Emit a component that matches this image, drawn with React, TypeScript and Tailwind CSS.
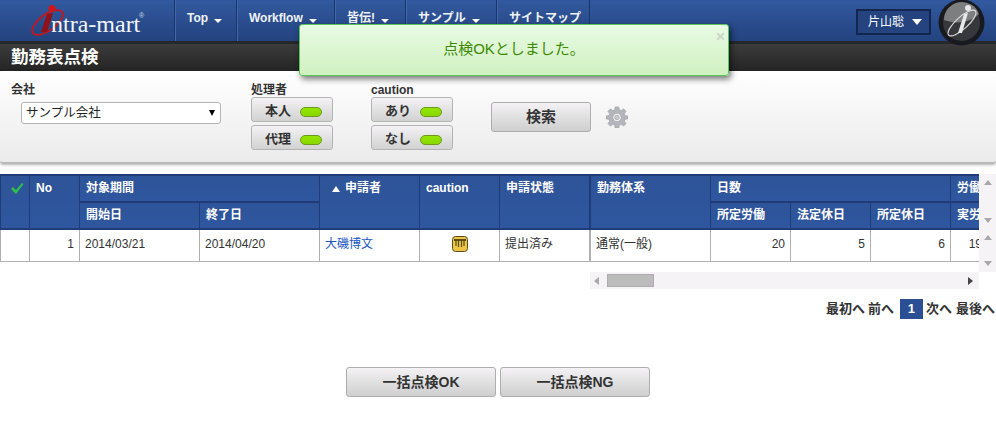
import { X } from "lucide-react";
import type { ReactNode } from "react";

const font = "font-['Liberation_Sans','Noto_Sans_CJK_JP',sans-serif]";

const navItems = [
  { label: "Top", w: "w-[62px]", caret: true },
  { label: "Workflow", w: "w-[98px]", caret: true },
  { label: "皆伝!", w: "w-[71px]", caret: true },
  { label: "サンプル", w: "w-[91px]", caret: true },
  { label: "サイトマップ", w: "w-[93px]", caret: false },
];

const Logo = () => (
  <div className="relative h-[41px] w-[174px] shrink-0">
    <svg className="absolute left-[30px] top-[3px]" width="36" height="36" viewBox="0 0 36 36">
      <ellipse cx="17.500" cy="19.500" rx="8" ry="18" transform="rotate(54 17.500 19.500)" fill="none" stroke="#c4161c" strokeWidth="1.800" />
      <circle cx="22" cy="5.500" r="3.500" fill="#d3151b" />
      <path d="M17 11 L23 10 L17 29 L11 29 Z" fill="#8f1218" />
    </svg>
    <span className="absolute left-[51px] top-[11px] font-['Liberation_Serif',serif] text-[24px] leading-[26px] text-[#f2f5fa]">
      ntra-mart
    </span>
    <span className="absolute left-[139px] top-[12px] text-[7px] leading-[8px] text-[#d5dbe8]">®</span>
  </div>
);

const Lamp = () => (
  <span className="mt-[1px] h-[10px] w-[22px] rounded-[5px] border border-[#6c9a1c] bg-gradient-to-b from-[#94e400] to-[#88d800]" />
);

const ToggleButton = ({ label }: { label: string }) => (
  <button className="flex h-[25px] w-[82px] items-center gap-[9px] rounded-[3px] border border-[#b4b4b4] bg-gradient-to-b from-[#f4f2f4] to-[#d2d2d2] pl-[13px] pt-[3px] text-[13px] font-bold text-[#333]">
    {label}
    <Lamp />
  </button>
);

const GrayButton = ({ label, className }: { label: string; className: string }) => (
  <button className={`rounded-[3px] border border-[#aeaeae] bg-gradient-to-b from-[#f4f2f4] to-[#cfcfcf] font-bold text-[#333] ${className}`}>
    {label}
  </button>
);

const Th = ({ children, className = "", ...rest }: { children?: ReactNode; className?: string; colSpan?: number; rowSpan?: number }) => (
  <th
    {...rest}
    className={`border-x border-x-[#1d3c78] border-y-2 border-y-[#1d3c78] bg-gradient-to-b from-[#2e5398] to-[#2f579f] px-[6px] py-0 pt-[4px] text-left align-top text-[12px] font-bold leading-[16px] text-white whitespace-nowrap ${className}`}
  >
    {children}
  </th>
);

const Td = ({ children, className = "" }: { children?: ReactNode; className?: string }) => (
  <td className={`h-[32px] border-x border-b border-[#b0b0b0] px-[5px] pb-[3px] text-[12px] text-[#333] ${className}`}>{children}</td>
);

const Arrow = ({ dir }: { dir: "up" | "down" | "left" | "right" }) => {
  const points = { up: "1,7 5,2 9,7", down: "1,3 9,3 5,8", left: "7,1 7,9 2,5", right: "3,1 3,9 8,5" }[dir];
  return (
    <svg width="10" height="10" viewBox="0 0 10 10">
      <polygon points={points} fill={dir === "right" ? "#444" : "#a8a8a8"} />
    </svg>
  );
};

const ScrollTrack = ({ className }: { className: string }) => (
  <div className={`flex flex-col items-center justify-between py-[4px] ${className}`}>
    <Arrow dir="up" />
    <Arrow dir="down" />
  </div>
);

const CautionIcon = () => (
  <svg className="mx-auto block" width="16" height="16" viewBox="0 0 16 16">
    <rect x="0.500" y="0.500" width="15" height="15" rx="3" fill="#ecc544" stroke="#5a4c20" />
    <rect x="2" y="3" width="12" height="2" fill="#5e4e18" />
    <path d="M4 5v5M6.500 5v6M9.500 5v6M12 5v5" stroke="#5e4e18" strokeWidth="1.200" />
  </svg>
);

const Gear = () => (
  <svg width="22" height="22" viewBox="0 0 24 24" fill="#b3b5bb" stroke="#9a9ca3" strokeWidth="0.600">
    <path
      fillRule="evenodd"
      d="M10 1h4l.6 3.200 1.900.8L19.200 3.100 21.900 5.800 20 8.500l.8 1.900L24 11v3l-3.200.6-.8 1.900 1.900 2.700-2.700 2.700-2.700-1.900-1.900.8L14 24h-4l-.6-3.200-1.900-.8-2.700 1.900-2.700-2.700L4 16.500l-.8-1.900L0 14v-3l3.200-.6.800-1.900L2.100 5.800 4.800 3.100 7.500 5l1.900-.8zM12 8a4.500 4.500 0 1 0 0 9 4.500 4.500 0 0 0 0-9z"
    />
    <circle cx="12" cy="12.500" r="2.500" fill="#c9cace" stroke="#8f9197" />
  </svg>
);

export default function App() {
  return (
    <div className={`relative h-[440px] w-[996px] overflow-hidden bg-white ${font}`}>
      {/* ヘッダー */}
      <header className="flex h-[44px] items-start border-b-[3px] border-b-[#26272b] bg-gradient-to-b from-[#32599f] to-[#24437f]">
        <Logo />
        <nav className="flex h-[41px] border-r border-r-[#1b3565]">
          {navItems.map((item) => (
            <div
              key={item.label}
              className={`flex items-start gap-[6px] border-l border-l-[#1b3565] pl-[12px] pt-[11px] text-[12px] font-bold leading-[14px] text-[#f0f3f8] shadow-[inset_1px_0_0_#3f68b0] ${item.w}`}
            >
              {item.label}
              {item.caret && <span className="mt-[8px] border-x-4 border-t-4 border-x-transparent border-t-white" />}
            </div>
          ))}
        </nav>
        <div className="ml-auto mr-[11px] flex items-start gap-[7px]">
          <div className="mt-[9px] flex h-[26px] w-[75px] items-center justify-end gap-[8px] border-2 border-[#12264f] bg-[#24437f] pr-[7px] text-[12px] text-white">
            片山聡
            <span className="border-x-[5px] border-t-[6px] border-x-transparent border-t-white" />
          </div>
          <svg width="47" height="46" viewBox="0 0 47 46">
            <circle cx="23.500" cy="22.500" r="23" fill="#181a20" />
            <circle cx="23.500" cy="22.500" r="18.500" fill="#36383c" />
            <path d="M6 20a18 18 0 0 1 35-6c-8 8-22 11-35 6z" fill="#7d7e80" />
            <ellipse cx="24" cy="23" rx="6" ry="18" transform="rotate(48 24 23)" fill="none" stroke="#dedede" strokeWidth="1.100" />
            <circle cx="30" cy="8" r="3" fill="#e8e8e8" />
            <path d="M26 14l4-1-6 20h-4z" fill="#e8e8e8" />
          </svg>
        </div>
      </header>

      {/* タイトル */}
      <div className="h-[27px] bg-gradient-to-b from-[#3c3c3c] to-[#242424] pl-[11px] pt-[2px] text-[17.500px] font-bold leading-[22px] text-white">
        勤務表点検
      </div>

      {/* 検索条件 */}
      <section className="flex h-[93px] rounded-[3px] border-b-2 border-b-[#b8b8b8] bg-gradient-to-b from-white to-[#ecebec] pl-[11px] pt-[12px] shadow-[0_1px_3px_rgba(0,0,0,0.3)]">
        <div className="w-[240px]">
          <div className="text-[12px] font-bold leading-[14px] text-[#333]">会社</div>
          <div className="ml-[10px] mt-[5px] flex h-[22px] w-[200px] items-center justify-between rounded-[3px] border border-[#b5b5b5] bg-white pl-[4px] pr-[5px] text-[12.500px] text-[#222]">
            サンプル会社
            <span className="border-x-[3.500px] border-t-[6px] border-x-transparent border-t-black" />
          </div>
        </div>
        <div className="w-[120px]">
          <div className="text-[12px] font-bold leading-[14px] text-[#333]">処理者</div>
          <div className="flex flex-col gap-[3px]">
            <ToggleButton label="本人" />
            <ToggleButton label="代理" />
          </div>
        </div>
        <div className="w-[120px]">
          <div className="text-[12px] font-bold leading-[14px] text-[#333]">caution</div>
          <div className="flex flex-col gap-[3px]">
            <ToggleButton label="あり" />
            <ToggleButton label="なし" />
          </div>
        </div>
        <GrayButton label="検索" className="mt-[19px] h-[30px] w-[100px] text-[15px]" />
        <div className="ml-[15px] mt-[23px]">
          <Gear />
        </div>
      </section>

      {/* 一覧 */}
      <div className="mt-[10px] flex h-[125px] items-start">
        <table className="w-[590px] shrink-0 table-fixed border-collapse">
          <colgroup>
            <col className="w-[29px]" />
            <col className="w-[50px]" />
            <col className="w-[120px]" />
            <col className="w-[120px]" />
            <col className="w-[100px]" />
            <col className="w-[80px]" />
            <col className="w-[90px]" />
          </colgroup>
          <thead>
            <tr className="h-[27px]">
              <Th rowSpan={2} className="!px-[9px] !pt-[5px]">
                <svg width="14" height="14" viewBox="0 0 14 14">
                  <path d="M1 8l2-2 3 3 6-7 1.500 1L6 13z" fill="#2fc04c" />
                </svg>
              </Th>
              <Th rowSpan={2}>No</Th>
              <Th colSpan={2}>対象期間</Th>
              <Th rowSpan={2} className="!pl-[12px]">
                <span className="mr-[5px] inline-block border-x-4 border-b-[6px] border-x-transparent border-b-white" />
                申請者
              </Th>
              <Th rowSpan={2}>caution</Th>
              <Th rowSpan={2}>申請状態</Th>
            </tr>
            <tr className="h-[27px]">
              <Th>開始日</Th>
              <Th>終了日</Th>
            </tr>
          </thead>
          <tbody>
            <tr>
              <Td />
              <Td className="text-right">1</Td>
              <Td>2014/03/21</Td>
              <Td>2014/04/20</Td>
              <Td>
                <span className="text-[#1a56c4]">大磯博文</span>
              </Td>
              <Td>
                <CautionIcon />
              </Td>
              <Td>提出済み</Td>
            </tr>
          </tbody>
        </table>
        <div className="flex w-[406px] shrink-0 flex-col">
          <div className="flex">
            <div className="w-[389px] overflow-hidden">
              <table className="w-[397px] table-fixed border-collapse">
                <colgroup>
                  <col className="w-[120px]" />
                  <col className="w-[80px]" />
                  <col className="w-[80px]" />
                  <col className="w-[80px]" />
                  <col className="w-[37px]" />
                </colgroup>
                <thead>
                  <tr className="h-[27px]">
                    <Th rowSpan={2}>勤務体系</Th>
                    <Th colSpan={3}>日数</Th>
                    <Th>労働時間</Th>
                  </tr>
                  <tr className="h-[27px]">
                    <Th>所定労働</Th>
                    <Th>法定休日</Th>
                    <Th>所定休日</Th>
                    <Th>実労働</Th>
                  </tr>
                </thead>
                <tbody>
                  <tr>
                    <Td>通常(一般)</Td>
                    <Td className="text-right">20</Td>
                    <Td className="text-right">5</Td>
                    <Td className="text-right">6</Td>
                    <Td className="text-right">19</Td>
                  </tr>
                </tbody>
              </table>
            </div>
            <div className="flex w-[17px] flex-col bg-[#f6f3f7]">
              <ScrollTrack className="h-[55px]" />
              <ScrollTrack className="h-[43px]" />
            </div>
          </div>
          <div className="flex h-[17px] w-[389px] items-center bg-[#f6f3f7] pl-[2px] pr-[4px]">
            <Arrow dir="left" />
            <div className="ml-[5px] h-[13px] w-[47px] border border-[#adadad] bg-[#bcbcbc]" />
            <span className="ml-auto flex">
              <Arrow dir="right" />
            </span>
          </div>
        </div>
      </div>

      {/* ページャー */}
      <div className="flex h-[20px] items-center justify-end gap-[3px] pr-[1px] text-[13px] font-bold text-[#333]">
        <span>最初へ</span>
        <span>前へ</span>
        <span className="ml-[3px] flex h-[20px] w-[23px] items-center justify-center bg-[#2b4f94] text-white">1</span>
        <span>次へ</span>
        <span className="ml-[1px]">最後へ</span>
      </div>

      <div className="mt-[48px] flex justify-center gap-[4px]">
        <GrayButton label="一括点検OK" className="h-[30px] w-[150px] text-[14px]" />
        <GrayButton label="一括点検NG" className="h-[30px] w-[150px] text-[14px]" />
      </div>

      {/* 通知 */}
      <div className="absolute left-[299px] top-[24px] flex h-[52px] w-[430px] items-center justify-center rounded-[3px] border border-[#59c659] bg-gradient-to-b from-[#e9fbe4] to-[#cff0c0] pb-[2px] text-[15px] text-[#3c8a00] shadow-[2px_3px_6px_rgba(0,0,0,0.55)]">
        点検OKとしました。
        <X className="absolute right-[2px] top-[6px] text-[#c9d8c6]" size={11} strokeWidth={4} />
      </div>
    </div>
  );
}
